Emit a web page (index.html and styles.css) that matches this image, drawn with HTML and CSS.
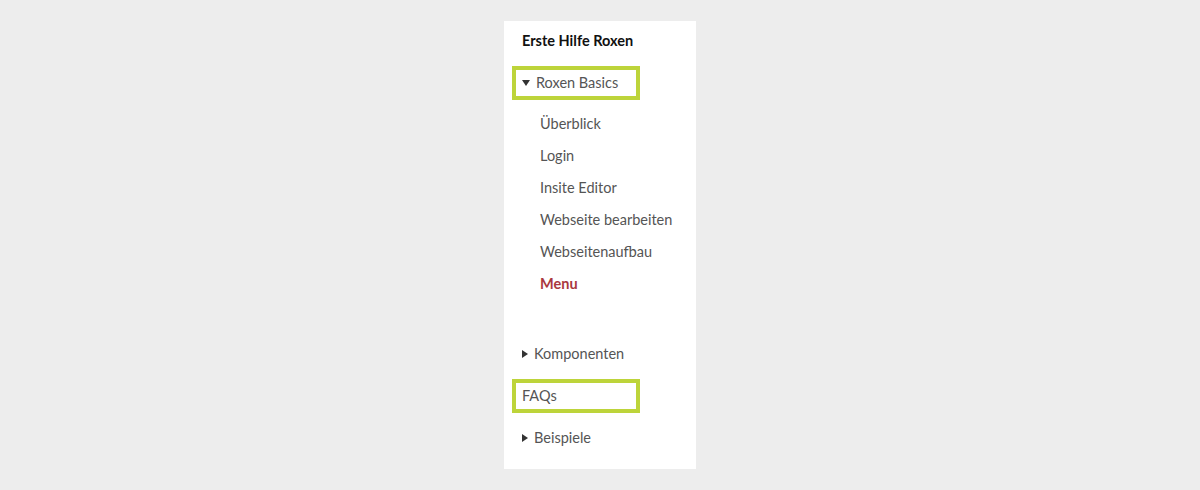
FILE: index.html
```html
<!DOCTYPE html>
<html>
<head>
    <title>Erste Hilfe Roxen</title>
    <link rel="stylesheet" href="styles.css">
</head>
<body>
    <nav class="side-nav">
        <div class="nav-title">Erste Hilfe Roxen</div>
        <div class="nav-item highlight">
            <svg class="caret" width="8" height="6" viewBox="0 0 8 6"><polygon points="0,0 8,0 4,6" fill="#333"/></svg>
            Roxen Basics
        </div>
        <ul class="sub-list">
            <li>Überblick</li>
            <li>Login</li>
            <li>Insite Editor</li>
            <li>Webseite bearbeiten</li>
            <li>Webseitenaufbau</li>
            <li class="active">Menu</li>
        </ul>
        <div class="nav-item">
            <svg class="caret" width="6" height="8" viewBox="0 0 6 8"><polygon points="0,0 6,4 0,8" fill="#333"/></svg>
            Komponenten
        </div>
        <div class="nav-item highlight">FAQs</div>
        <div class="nav-item">
            <svg class="caret" width="6" height="8" viewBox="0 0 6 8"><polygon points="0,0 6,4 0,8" fill="#333"/></svg>
            Beispiele
        </div>
    </nav>
</body>
</html>
```

FILE: styles.css
```css
body {
    margin: 0;
    background-color: #ededed;
    font-family: Lato, "Open Sans", sans-serif;
    font-size: 14.5px;
    color: #555;
}
.side-nav {
    width: 176px;
    margin: 21px auto 0;
    background-color: #fff;
    padding: 3px 8px 14px;
    display: flex;
    flex-direction: column;
    gap: 8px;
}
.nav-title,
.nav-item {
    height: 34px;
    line-height: 34px;
    padding-left: 6px;
    border: 4px solid transparent;
    box-sizing: border-box;
    width: 128px;
    display: flex;
    align-items: center;
    white-space: nowrap;
}
.nav-title {
    width: auto;
    font-weight: bold;
    color: #111;
}
.highlight {
    border-color: #bdd43a;
}
.caret {
    margin-right: 6px;
}
.sub-list {
    list-style: none;
    margin: 0 0 29px;
    padding: 0 0 0 28px;
}
.sub-list li {
    height: 32px;
    line-height: 32px;
}
.sub-list .active {
    color: #a9383e;
    font-weight: bold;
}
```
